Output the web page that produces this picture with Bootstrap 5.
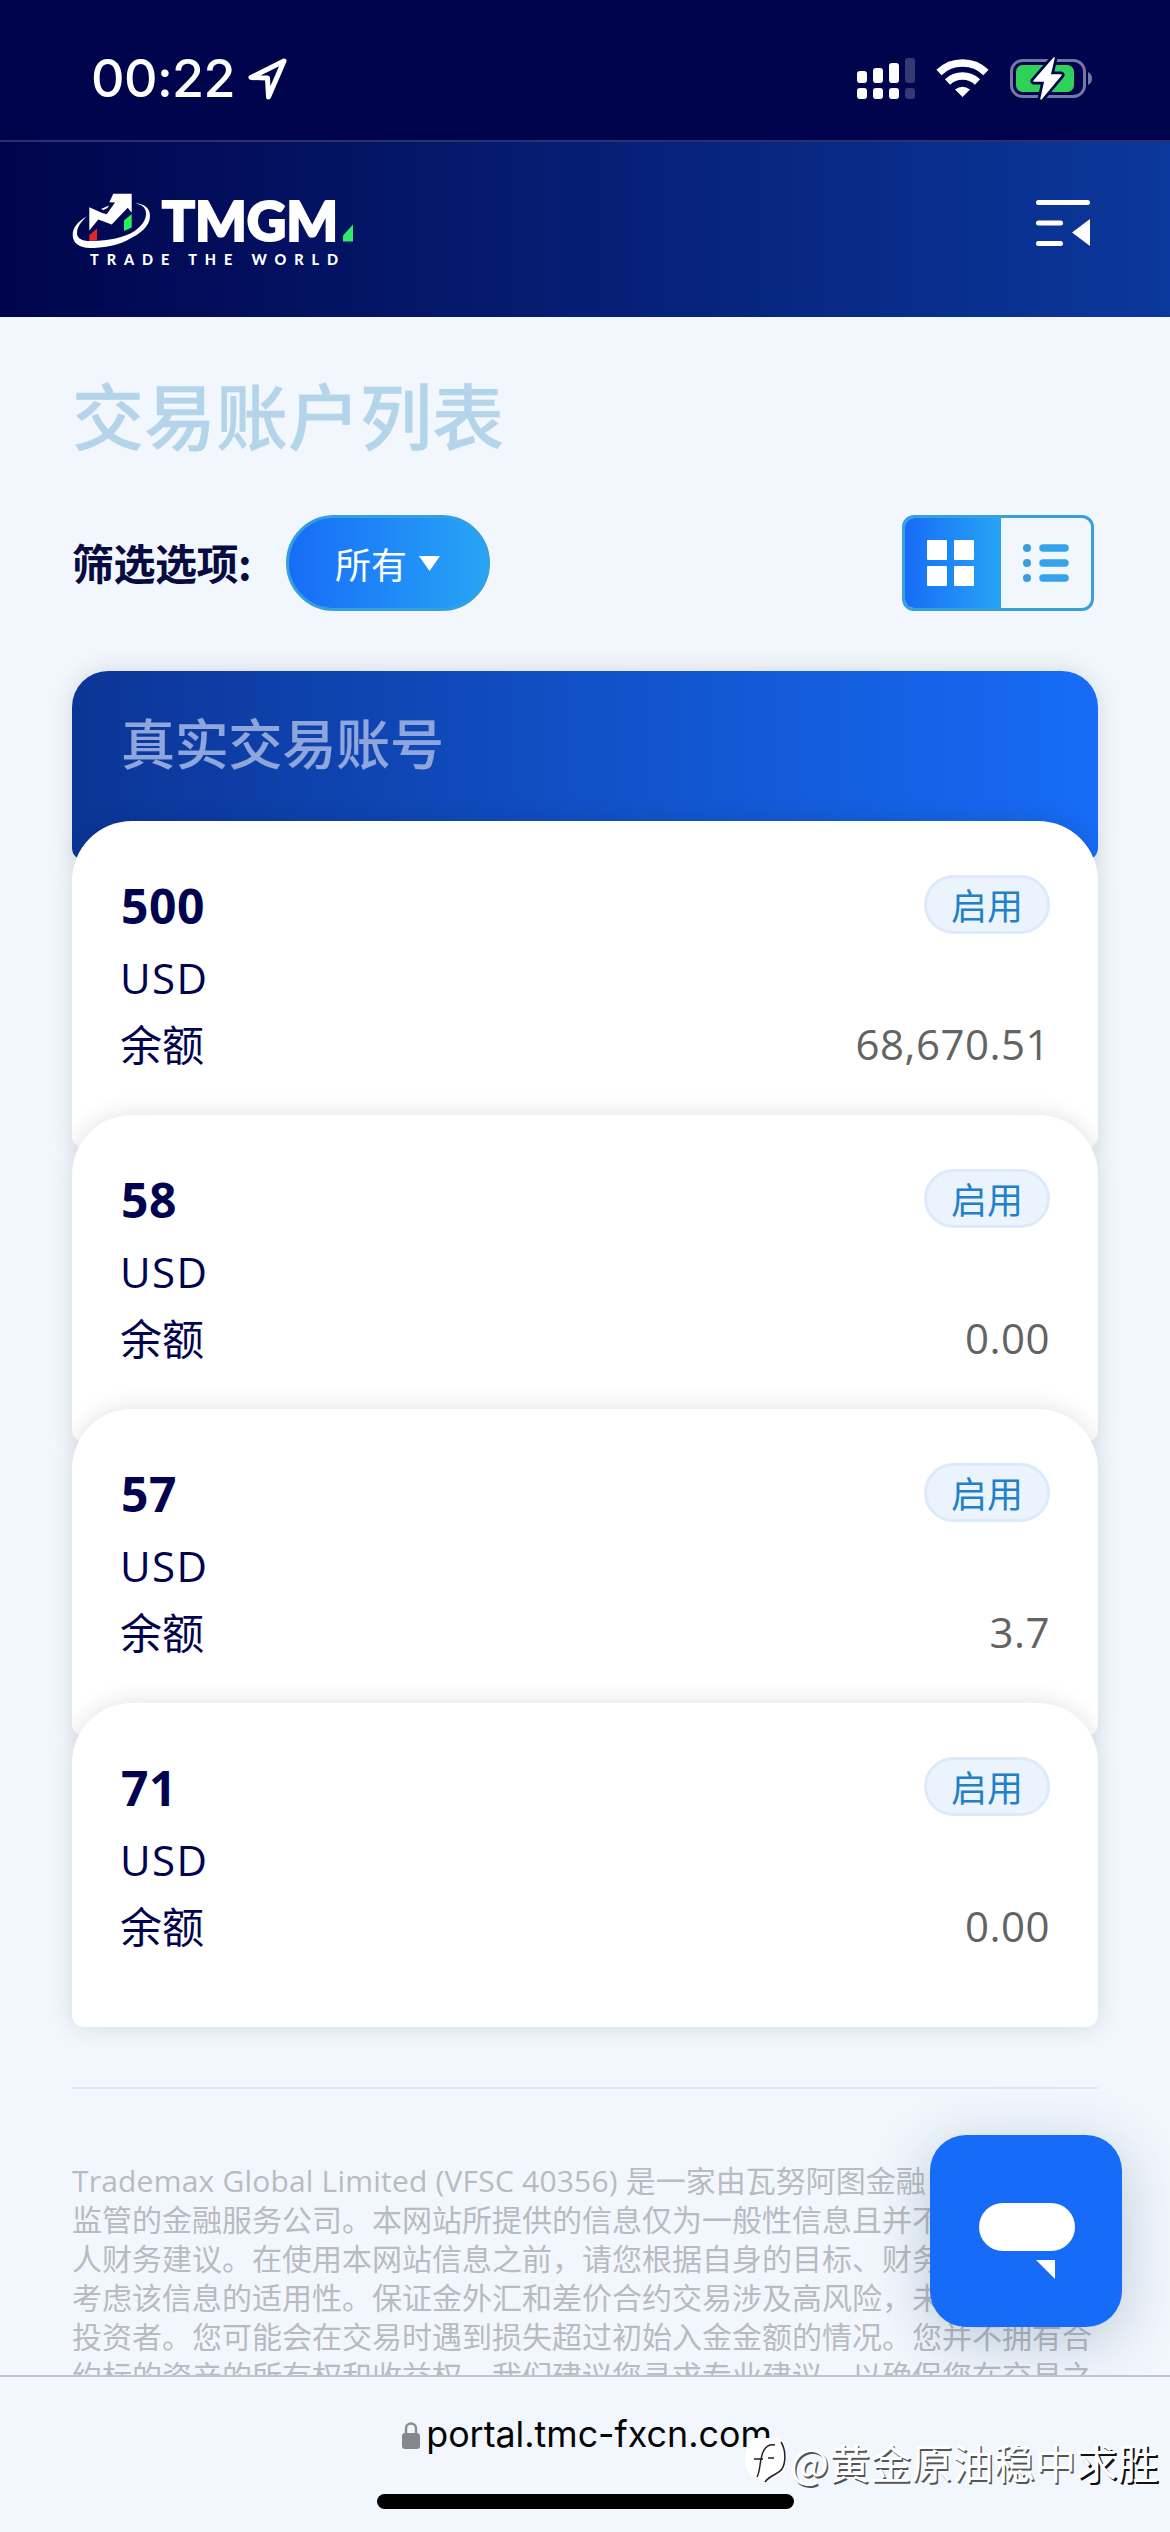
<!DOCTYPE html>
<html lang="zh-CN">
<head>
<meta charset="utf-8">
<meta name="viewport" content="width=device-width, initial-scale=1">
<title>TMGM</title>
<link href="https://cdn.jsdelivr.net/npm/bootstrap@5.3.0/dist/css/bootstrap.min.css" rel="stylesheet">
<style>
body{width:1170px;height:2532px;overflow:hidden;background:#f2f7fe;color:#02044f;font-family:"Open Sans","Noto Sans CJK SC",sans-serif;font-size:42px;line-height:66px}
.cjk{font-family:"Noto Sans CJK SC",sans-serif}
svg{display:block;flex:none;overflow:visible}
.status-bar{height:142px;background:#00044c;border-bottom:2px solid #2b3170;padding:17px 78px 0 91px}
.clock{font:500 52px/60px Inter,sans-serif;color:#fff;letter-spacing:-.6px;width:142px;white-space:nowrap}
.site-head{height:175px;background:linear-gradient(90deg,#00044c,#0b389c);padding:0 80px 0 71px}
.menu-icon{margin:-11px 0 0}
.page{padding:0 72px;height:2058px;overflow:hidden;position:relative}
.page-title{font-size:72px;line-height:90px;font-weight:500;color:#b4d4ea;-webkit-text-stroke:.4px #b4d4ea;margin:51px 0 0;height:147px}
.filter-label{font-size:42px;line-height:66px;padding-bottom:3px;font-weight:700;color:#070b40;width:214px;white-space:nowrap;letter-spacing:-.5px}
.btn.pick{width:204px;height:96px;border:3px solid #34a0e0;border-radius:48px;background:linear-gradient(90deg,#176cf7,#27a5f6);color:#fff;font-size:36px;line-height:1;padding:0;gap:11px}
.view-switch{width:192px;height:96px;border:3px solid #38a0dd;border-radius:12px;overflow:hidden}
.view-switch .on{width:96px;padding-right:6px;background:linear-gradient(90deg,#176cf7,#27a5f6)}
.accounts{margin-top:60px}
.group-head{height:189px;margin-bottom:-39px;border-radius:36px 36px 12px 12px;background:linear-gradient(90deg,#0b3596,#176cf7);padding:30px 49px;box-shadow:0 0 24px rgba(0,0,0,.12)}
.group-head h2{font-size:54px;line-height:81px;font-weight:500;color:#8fa6dd;-webkit-text-stroke:.2px #8fa6dd;letter-spacing:-.2px;margin:0}
.account{position:relative;height:327px;margin-bottom:-33px;background:#fff;border-radius:60px 60px 12px 12px;padding:54px 48px 0 49px;box-shadow:0 0 24px rgba(0,0,0,.12)}
.account:last-child{height:324px;margin-bottom:0}
.acc-no{font-size:48px;font-weight:700;line-height:61px;letter-spacing:.6px}
.state{width:126px;height:59px;border:3px solid #dceafa;border-radius:30px;background:#ebf4fd;color:#2180c8;font-size:36px;line-height:1;padding-bottom:1px}
.ccy{margin-top:9px;letter-spacing:1.4px;margin-left:-1px}
.bal-label{margin:-1px 0 0 -1px}
.amount{color:#636363;letter-spacing:.5px}
.rule{height:2px;background:#e1e6f0;margin-top:60px}
.legal{margin:72px -20px 0 0;font-size:30px;line-height:39px;color:#b9bbc0;white-space:nowrap}
.latin{letter-spacing:.2px}
.chat-btn{position:absolute;left:930px;top:1818px;width:192px;height:192px;border-radius:36px;background:#176cf7;box-shadow:0 12px 60px rgba(0,50,80,.24)}
.browser-bar{height:157px;background:#f2f7fe;border-top:2px solid #bfc6d2;position:relative}
.url{height:117px;font:400 35.800px/1 Inter,sans-serif;color:#050505;padding:0 0 1px 4px;gap:6px}
.home-pill{width:417px;height:15px;border-radius:8px;background:#000;margin-left:377px}
.stamp{position:absolute;left:742px;top:59px;color:#fff;font-size:41.200px;line-height:50px;font-weight:400;white-space:nowrap;text-shadow:1.5px 1.5px .5px #555}
.stamp .deep{text-shadow:2px 2px .5px #111}
</style>
<script src="https://cdn.jsdelivr.net/npm/bootstrap@5.3.0/dist/js/bootstrap.bundle.min.js"></script>
</head>
<body class="d-flex flex-column m-0">
<div class="status-bar d-flex align-items-center justify-content-between">
  <div class="d-flex align-items-center">
    <span class="clock">00:22</span>
    <svg class="ms-3" width="40" height="44" viewBox="0 0 40 44"><path d="M35 4 2 20.500l16.500.5L19.500 40Z" fill="none" stroke="#fff" stroke-width="5" stroke-linejoin="round"/></svg>
  </div>
  <svg width="235" height="44" viewBox="0 0 235 44">
    <g fill="#fff"><rect y="14" width="10" height="12" rx="3"/><rect x="16" y="11" width="10" height="15" rx="3"/><rect x="32" y="6" width="10" height="20" rx="3"/><rect y="31" width="10" height="11" rx="3"/><rect x="16" y="31" width="10" height="11" rx="3"/><rect x="32" y="31" width="10" height="11" rx="3"/></g>
    <g fill="#343974"><rect x="48" y="1" width="10" height="25" rx="3"/><rect x="48" y="31" width="10" height="11" rx="3"/></g>
    <g fill="none" stroke="#fff" stroke-width="7.500"><path d="M82 15.500a34 34 0 0 1 47 0"/><path d="M90.500 25a22 22 0 0 1 30 0"/></g>
    <path d="m105.500 40-7.500-7.500q7.500-5.500 15 0Z" fill="#fff"/>
    <rect x="154.500" y="3.500" width="73" height="36" rx="11" fill="none" stroke="#7478a5" stroke-width="3"/>
    <path d="M231 15q4 2 4 6.500t-4 6.500Z" fill="#7478a5"/>
    <rect x="159" y="8" width="58" height="27" rx="6.500" fill="#30d158"/>
    <path d="m197 1-20 23h11l-4 18 20-24h-11Z" fill="#fff" stroke="#00044c" stroke-width="7" stroke-linejoin="round"/>
    <path d="m197 1-20 23h11l-4 18 20-24h-11Z" fill="#fff" stroke="#fff" stroke-width="1.500" stroke-linejoin="round"/>
  </svg>
</div>
<header class="site-head d-flex align-items-center justify-content-between">
  <svg width="284" height="80" viewBox="0 0 284 80">
    <path d="M15.700 26.500C6 32 1.700 38 1.700 45c0 8 7 13 17 13 13 0 26-2 37-7.500C70 43.500 79 36 79 26c0-8-6-12.500-15-12.700 8 1.500 11 5 11 10.500 0 6-4 12-11 17C53 48 34 51.500 19 51 11 51 6 48.500 6 43c0-6 4-11 9.700-16.500Z" fill="#fff"/>
    <path d="m18.300 40.500V17.200l12.400 5.600 5 1.500L44 12.500l-5.700-.3 4-8.400h18.400v19l-4-5-16 16.700-13.400-5ZM30 19l8-3.500-1.500 2.500-4 2Z" fill="#fff"/>
    <path d="M18.300 51v-6l7.700-6.500v12Z" fill="#e5232c"/><path d="M53 41V30.500l7.700-6.500v13.500Z" fill="#2bef5c"/>
    <text x="91" y="51" fill="#fff" stroke="#fff" stroke-width="2.200" font-family="Lato" font-size="56" font-weight="900" textLength="176" lengthAdjust="spacingAndGlyphs">TMGM</text>
    <path d="M272 51.500v-6l10-11v17Z" fill="#31e86b"/>
    <text x="19" y="75" fill="#fff" font-family="Lato" font-size="14.500" font-weight="900" textLength="248">TRADE THE WORLD</text>
  </svg>
  <svg class="menu-icon" width="54" height="48" viewBox="0 0 54 48"><path d="M2.500 2.500h49M2.500 23h22M2.500 43.500h22" stroke="#fff" stroke-width="5" stroke-linecap="round"/><path d="M54 19v27L36 32.500Z" fill="#fff"/></svg>
</header>
<main class="page">
  <h1 class="page-title cjk">交易账户列表</h1>
  <div class="d-flex align-items-center">
    <span class="filter-label cjk">筛选选项:</span>
    <button class="btn pick cjk d-flex align-items-center justify-content-center">所有<svg width="23" height="16"><path d="M1 1h21L11.500 16Z" fill="#fff"/></svg></button>
    <div class="view-switch ms-auto me-1 d-flex" role="group">
      <div class="on d-flex align-items-center justify-content-center"><svg width="48" height="48"><g fill="#fff"><rect x="1" y="1" width="20" height="20" rx="1"/><rect x="28" y="1" width="20" height="20" rx="1"/><rect x="1" y="27" width="20" height="20" rx="1"/><rect x="28" y="27" width="20" height="20" rx="1"/></g></svg></div>
      <div class="flex-fill d-flex align-items-center justify-content-center"><svg width="46" height="40"><path d="M20 5h22M20 20h22M20 35h22" stroke="#34a3ea" stroke-width="7.500" stroke-linecap="round"/><g fill="#3c9ddb"><circle cx="4" cy="5" r="4"/><circle cx="4" cy="20" r="4"/><circle cx="4" cy="35" r="4"/></g></svg></div>
    </div>
  </div>
  <section class="accounts">
    <div class="group-head"><h2 class="cjk">真实交易账号</h2></div>
    <article class="account">
      <div class="d-flex justify-content-between"><span class="acc-no">500</span><span class="state cjk d-flex align-items-center justify-content-center">启用</span></div>
      <div class="ccy">USD</div>
      <div class="d-flex justify-content-between"><span class="bal-label cjk">余额</span><span class="amount">68,670.51</span></div>
    </article>
    <article class="account">
      <div class="d-flex justify-content-between"><span class="acc-no">58</span><span class="state cjk d-flex align-items-center justify-content-center">启用</span></div>
      <div class="ccy">USD</div>
      <div class="d-flex justify-content-between"><span class="bal-label cjk">余额</span><span class="amount">0.00</span></div>
    </article>
    <article class="account">
      <div class="d-flex justify-content-between"><span class="acc-no">57</span><span class="state cjk d-flex align-items-center justify-content-center">启用</span></div>
      <div class="ccy">USD</div>
      <div class="d-flex justify-content-between"><span class="bal-label cjk">余额</span><span class="amount">3.7</span></div>
    </article>
    <article class="account">
      <div class="d-flex justify-content-between"><span class="acc-no">71</span><span class="state cjk d-flex align-items-center justify-content-center">启用</span></div>
      <div class="ccy">USD</div>
      <div class="d-flex justify-content-between"><span class="bal-label cjk">余额</span><span class="amount">0.00</span></div>
    </article>
  </section>
  <div class="rule"></div>
  <p class="legal"><span class="latin">Trademax Global Limited (VFSC 40356) </span>是一家由瓦努阿图金融<br>监管的金融服务公司。本网站所提供的信息仅为一般性信息且并不<br>人财务建议。在使用本网站信息之前，请您根据自身的目标、财务<br>考虑该信息的适用性。保证金外汇和差价合约交易涉及高风险，未<br>投资者。您可能会在交易时遇到损失超过初始入金金额的情况。您并不拥有合<br>约标的资产的所有权和收益权。我们建议您寻求专业建议，以确保您在交易之</p>
  <div class="chat-btn"><svg width="192" height="192"><rect x="49" y="68" width="96" height="48" rx="24" fill="#fff"/><path d="M106 125h19v19Z" fill="#fff"/></svg></div>
</main>
<footer class="browser-bar">
  <div class="url d-flex align-items-center justify-content-center">
    <svg width="18" height="28" viewBox="0 0 18 28"><path d="M4 13V7.500a5 5 0 0 1 10 0V13" fill="none" stroke="#8b8d95" stroke-width="2.500"/><rect y="12" width="18" height="16" rx="3" fill="#85878f"/></svg>
    <span>portal.tmc-fxcn.com</span>
  </div>
  <div class="home-pill"></div>
  <div class="stamp cjk d-flex align-items-center"><svg width="48" height="50" viewBox="0 0 48 50"><path d="M13 2h20q10 2 10 12v15q0 8-9 12-8 2-11 5l-5-3Q3 40 3 24 3 8 13 2Z" fill="#fff"/><path d="M15 41c4-7 2-18 7-27 3-5 7-6 11-5M12 23h9M26 22h6M39 6c5 8 5 20 1 27-4 6-11 5-17 13" fill="none" stroke="#222" stroke-width="1.500"/></svg><span>@黄金原油稳中<span class="deep">求胜</span></span></div>
</footer>
</body>
</html>
